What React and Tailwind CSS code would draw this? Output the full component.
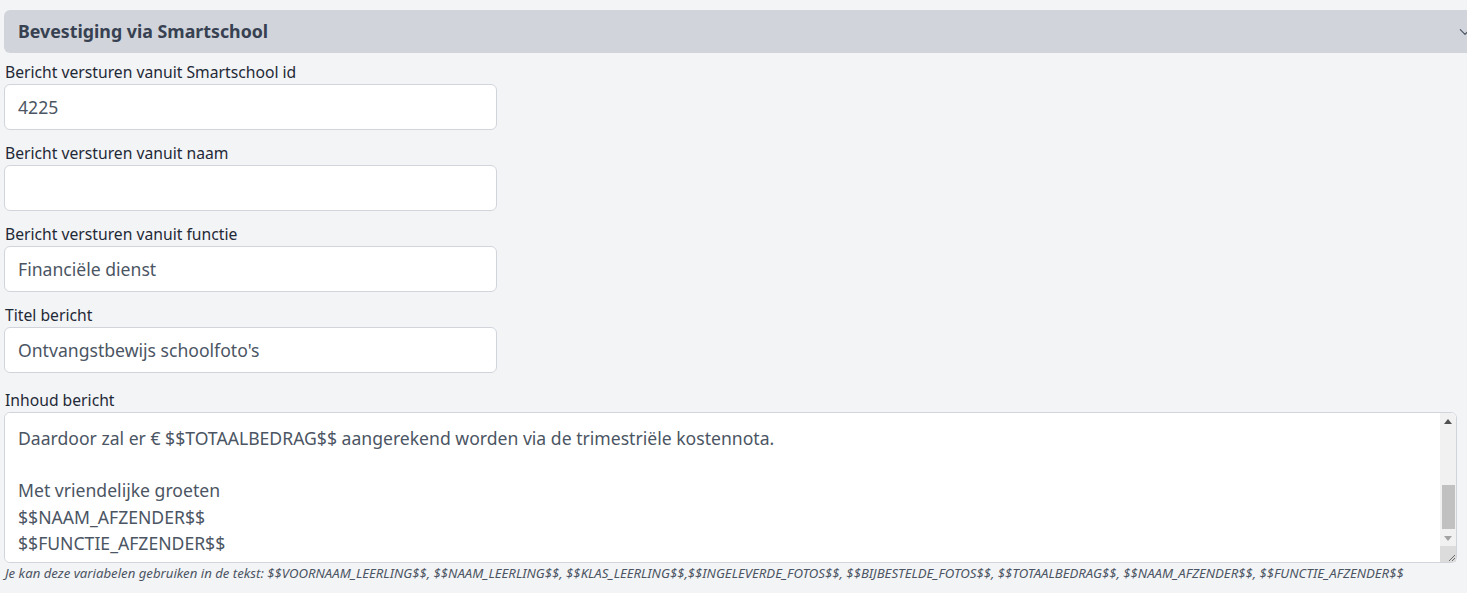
import React, { useEffect, useRef } from "react";

const body = `Beste ouder,

Wij hebben de schoolfoto's van $$VOORNAAM_LEERLING$$ $$NAAM_LEERLING$$ uit klas $$KLAS_LEERLING$$ goed ontvangen.

Aantal ingeleverde foto's: $$INGELEVERDE_FOTOS$$
Aantal bijbestelde foto's: $$BIJBESTELDE_FOTOS$$

Daardoor zal er € $$TOTAALBEDRAG$$ aangerekend worden via de trimestriële kostennota.

Met vriendelijke groeten
$$NAAM_AFZENDER$$
$$FUNCTIE_AFZENDER$$`;

function Field({ label, value, last }) {
    return (
        <div className={last ? "mb-[17px]" : "mb-[13px]"}>
            <label className="block text-[15.7px] leading-[21px] text-[#1f2937] pl-[1px] mb-[1px]">{label}</label>
            <input
                readOnly
                value={value}
                className="block w-[493px] h-[46px] px-[13px] rounded-md border border-[#d1d5db] bg-white text-[17.6px] text-[#4b5563] outline-none"
            />
        </div>
    );
}

function FakeScrollbar() {
    return (
        <div className="absolute top-[1px] bottom-[1px] right-[1px] w-[16px] flex flex-col bg-[#f1f1f1] rounded-tr-md overflow-hidden">
            <div className="h-[16px] flex items-center justify-center">
                <svg width="8" height="5" viewBox="0 0 8 5"><path d="M4 0L8 5H0z" fill="#505050" /></svg>
            </div>
            <div className="flex-1 flex flex-col justify-end pb-[1px]">
                <div className="h-[44px] ml-[2px] mr-[1px] bg-[#c1c1c1]" />
            </div>
            <div className="h-[16px] flex items-center justify-center">
                <svg width="8" height="5" viewBox="0 0 8 5"><path d="M0 0H8L4 5z" fill="#a3a3a3" /></svg>
            </div>
            <div className="h-[16px] bg-[#dcdcdc] flex items-end justify-end">
                <svg width="10" height="10" viewBox="0 0 10 10">
                    <path d="M9 3L3 9M9 6L6 9" stroke="#6b6b6b" strokeWidth="1" />
                </svg>
            </div>
        </div>
    );
}

export default function App() {
    const areaRef = useRef(null);

    useEffect(() => {
        if (areaRef.current) {
            areaRef.current.scrollTop = areaRef.current.scrollHeight;
        }
    }, []);

    return (
        <div className="min-h-screen w-full overflow-hidden bg-[#f3f4f6] pt-[10px] pl-[4px]" style={{ fontFamily: "'Noto Sans', sans-serif" }}>
            <div className="w-[1482px] h-[43px] flex items-center justify-between rounded-md bg-[#d1d5db] pl-[14px] pr-[14px]">
                <span className="text-[17.8px] font-bold text-[#374151]">Bevestiging via Smartschool</span>
                <svg width="14" height="14" viewBox="0 0 24 24" fill="none" stroke="#4b5563" strokeWidth="2" strokeLinecap="round" strokeLinejoin="round">
                    <path d="M4 8l8 8 8-8" />
                </svg>
            </div>

            <div className="mt-[9px]">
                <Field label="Bericht versturen vanuit Smartschool id" value="4225" />
                <Field label="Bericht versturen vanuit naam" value="" />
                <Field label="Bericht versturen vanuit functie" value="Financiële dienst" />
                <Field label="Titel bericht" value="Ontvangstbewijs schoolfoto's" last />

                <div className="pr-[10px]">
                    <label className="block text-[15.7px] leading-[21px] text-[#1f2937] pl-[1px] mb-[1px]">Inhoud bericht</label>
                    <div className="relative">
                        <textarea
                            ref={areaRef}
                            readOnly
                            value={body}
                            className="block w-full h-[151px] pl-[13px] pr-[30px] pt-[10px] pb-[6px] rounded-md border border-[#d1d5db] bg-white text-[17.6px] leading-[26.25px] text-[#4b5563] outline-none resize-none [scrollbar-width:none]"
                        />
                        <FakeScrollbar />
                    </div>
                    <p className="mt-[1px] pl-[1px] text-[13.2px] leading-[18px] italic text-[#4b5563]">
                        Je kan deze variabelen gebruiken in de tekst: $$VOORNAAM_LEERLING$$, $$NAAM_LEERLING$$, $$KLAS_LEERLING$$,$$INGELEVERDE_FOTOS$$, $$BIJBESTELDE_FOTOS$$, $$TOTAALBEDRAG$$, $$NAAM_AFZENDER$$, $$FUNCTIE_AFZENDER$$
                    </p>
                </div>
            </div>
        </div>
    );
}
